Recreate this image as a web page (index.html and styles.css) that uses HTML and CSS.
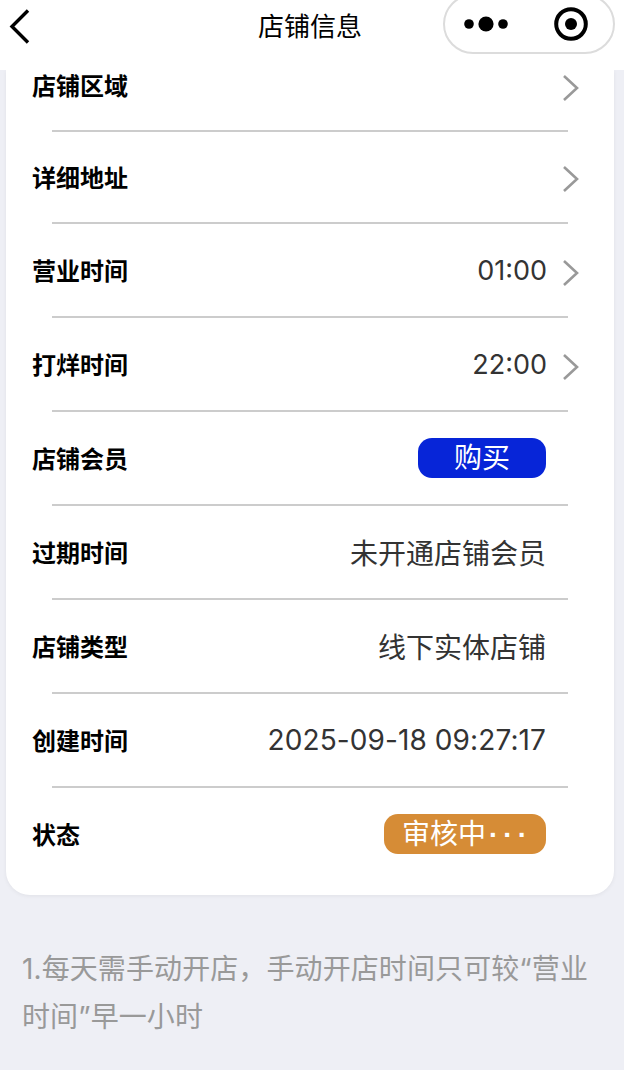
FILE: index.html
```html
<!DOCTYPE html>
<html lang="zh-CN">
<head>
  <meta charset="UTF-8" />
  <meta name="viewport" content="width=device-width, initial-scale=1.0"/>
  <title>店铺信息</title>
  <link rel="stylesheet" href="styles.css">
</head>
<body>
  <header class="navbar">
    <svg class="back" width="22" height="36" viewBox="0 0 22 36">
      <path d="M19 1.5 L3 17.5 L19 33.5" fill="none" stroke="#000" stroke-width="3.4"/>
    </svg>
    <h1 class="title">店铺信息</h1>
    <div class="capsule">
      <svg width="44" height="16" viewBox="0 0 44 16">
        <circle cx="5" cy="8" r="4.8" fill="#000"/>
        <circle cx="22" cy="8" r="7.6" fill="#000"/>
        <circle cx="39" cy="8" r="4.8" fill="#000"/>
      </svg>
      <svg width="36" height="36" viewBox="0 0 36 36">
        <circle cx="18" cy="18" r="14.8" fill="none" stroke="#000" stroke-width="4"/>
        <circle cx="18" cy="18" r="6" fill="#000"/>
      </svg>
    </div>
  </header>

  <section class="card">
    <div class="row row-first">
      <span class="label">店铺区域</span>
      <svg class="arrow" width="18" height="28" viewBox="0 0 18 28"><path d="M2 2 L15 14 L2 26"/></svg>
    </div>
    <div class="divider"></div>
    <div class="row row-short">
      <span class="label">详细地址</span>
      <svg class="arrow" width="18" height="28" viewBox="0 0 18 28"><path d="M2 2 L15 14 L2 26"/></svg>
    </div>
    <div class="divider"></div>
    <div class="row">
      <span class="label">营业时间</span>
      <span class="value value-num">01:00</span>
      <svg class="arrow" width="18" height="28" viewBox="0 0 18 28"><path d="M2 2 L15 14 L2 26"/></svg>
    </div>
    <div class="divider"></div>
    <div class="row">
      <span class="label">打烊时间</span>
      <span class="value value-num">22:00</span>
      <svg class="arrow" width="18" height="28" viewBox="0 0 18 28"><path d="M2 2 L15 14 L2 26"/></svg>
    </div>
    <div class="divider"></div>
    <div class="row">
      <span class="label">店铺会员</span>
      <span class="tag tag-buy">购买</span>
    </div>
    <div class="divider"></div>
    <div class="row">
      <span class="label">过期时间</span>
      <span class="value">未开通店铺会员</span>
    </div>
    <div class="divider"></div>
    <div class="row">
      <span class="label">店铺类型</span>
      <span class="value">线下实体店铺</span>
    </div>
    <div class="divider"></div>
    <div class="row">
      <span class="label">创建时间</span>
      <span class="value value-date">2025-09-18 09:27:17</span>
    </div>
    <div class="divider"></div>
    <div class="row row-last">
      <span class="label">状态</span>
      <span class="tag tag-status">审核中<span class="dots">···</span></span>
    </div>
  </section>

  <p class="notice">1.每天需手动开店，手动开店时间只可较“营业时间”早一小时</p>
</body>
</html>
```

FILE: styles.css
```css
body {
  margin: 0;
  height: 1070px;
  overflow: hidden;
  background-color: #eeeff5;
  font-family: "Inter", "Noto Sans CJK SC", sans-serif;
}

.navbar {
  display: flex;
  align-items: center;
  justify-content: space-between;
  position: relative;
  height: 70px;
  padding: 0 9px 16px 9px;
  box-sizing: border-box;
  background-color: #fff;
}

.title {
  position: absolute;
  left: 0;
  right: 4px;
  top: 8px;
  margin: 0;
  text-align: center;
  font-size: 26px;
  line-height: 38px;
  font-weight: 400;
  color: #000;
}

.capsule {
  display: flex;
  align-items: center;
  justify-content: space-between;
  width: 172px;
  height: 60px;
  margin-top: -6px;
  padding: 0 24px 0 19px;
  box-sizing: border-box;
  border: 2px solid #dcdcdc;
  border-radius: 30px;
}

.card {
  margin: 0 10px 0 6px;
  background-color: #fff;
  border-radius: 0 0 24px 24px;
  box-shadow: 0 1px 4px rgba(0, 0, 0, 0.06);
}

.row {
  display: flex;
  align-items: center;
  height: 92px;
  padding: 0 68px 0 26px;
}

.row-first {
  height: 32px;
  padding-bottom: 28px;
}

.row-short {
  height: 90px;
}

.row-last {
  height: 92px;
  padding-bottom: 15px;
}

.row:has(.arrow) {
  padding-right: 34px;
}

.label {
  margin-top: -2px;
  margin-right: auto;
  font-size: 24px;
  font-weight: 600;
  color: #000;
}

.row-first .label {
  margin-top: -4px;
}

.value {
  font-size: 28px;
  color: #333;
}

.value-num {
  font-size: 27px;
}

.value-date {
  letter-spacing: 0.1px;
}

.arrow {
  margin-top: 6px;
  margin-left: 15px;
  fill: none;
  stroke: #999;
  stroke-width: 2.6;
}

.row-first .arrow {
  margin-top: 3px;
}

.row-short .arrow {
  margin-top: 4px;
}

.divider {
  height: 2px;
  margin: 0 46px;
  background-color: #ccc;
}

.tag {
  height: 40px;
  line-height: 40px;
  border-radius: 14px;
  font-size: 28px;
  text-align: center;
  color: #fff;
}

.tag-buy {
  width: 128px;
  background-color: #0725d8;
}

.tag-status {
  width: 162px;
  padding-left: 18px;
  box-sizing: border-box;
  text-align: left;
  background-color: #d68c36;
}

.dots {
  margin-left: 3px;
  font-family: "Liberation Sans", sans-serif;
  font-weight: 700;
  letter-spacing: 5px;
}

.notice {
  margin: 50px 34px 0 22px;
  font-size: 28px;
  line-height: 48px;
  letter-spacing: 0.1px;
  color: #999;
}
```
